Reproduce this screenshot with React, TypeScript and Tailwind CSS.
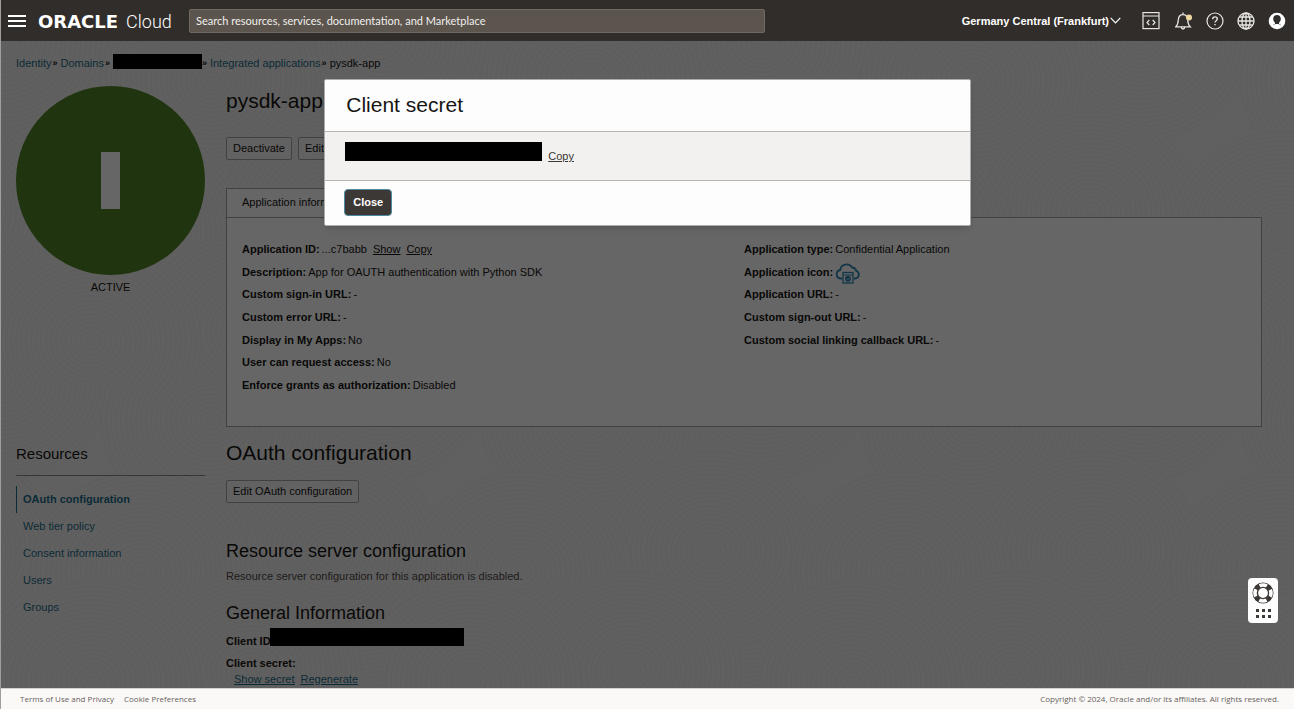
import React from "react";

type Detail = { label: string; value: React.ReactNode };

const linkClass = "text-[#1b6c87]";

function Crumb({ children }: { children: React.ReactNode }) {
  return (
    <li className="flex items-center gap-px">
      <a href="#" className={linkClass}>
        {children}
      </a>
      <Separator />
    </li>
  );
}

function Separator() {
  return <span className="text-[9px] font-bold">»</span>;
}

function AppIcon() {
  return (
    <svg className="inline-block" width="26" height="22" viewBox="0 0 26 22" fill="none" stroke="#2f86b5" strokeWidth="1.8" role="img" aria-label="Application icon">
      <path d="M7 15.500H5.500a4.300 4.300 0 0 1-.3-8.500 6.500 6.500 0 0 1 12-2.500 4.500 4.500 0 0 1 4 3.300 4 4 0 0 1-.7 7.700H19" />
      <rect x="8" y="9.500" width="10" height="10.500" strokeWidth="1.300" />
      <path d="M8.500 12h9" strokeWidth="1" />
      <circle cx="13" cy="15.800" r="3" fill="#2f86b5" stroke="none" />
      <path d="M11.800 15.800l1 1 1.500-2" stroke="#d8e8f0" strokeWidth="0.800" />
    </svg>
  );
}

const leftDetails: Detail[] = [
  {
    label: "Application ID:",
    value: (
      <>
        ...c7babb
        <a href="#" className="ml-1.5 underline">Show</a>
        <a href="#" className="ml-1.5 underline">Copy</a>
      </>
    ),
  },
  { label: "Description:", value: "App for OAUTH authentication with Python SDK" },
  { label: "Custom sign-in URL:", value: "-" },
  { label: "Custom error URL:", value: "-" },
  { label: "Display in My Apps:", value: "No" },
  { label: "User can request access:", value: "No" },
  { label: "Enforce grants as authorization:", value: "Disabled" },
];

const rightDetails: Detail[] = [
  { label: "Application type:", value: "Confidential Application" },
  { label: "Application icon:", value: <span className="inline-flex pt-1"><AppIcon /></span> },
  { label: "Application URL:", value: "-" },
  { label: "Custom sign-out URL:", value: "-" },
  { label: "Custom social linking callback URL:", value: "-" },
];

function DetailList({ items }: { items: Detail[] }) {
  return (
    <dl className="grid h-[158px] grid-rows-7">
      {items.map((d) => (
        <div key={d.label} className="flex items-center gap-0.5">
          <dt className="font-bold">{d.label}</dt>
          <dd className="flex items-center">{d.value}</dd>
        </div>
      ))}
    </dl>
  );
}

function OutlineButton({ children }: { children: React.ReactNode }) {
  return (
    <button type="button" className="flex h-[23px] items-center rounded-xs border border-[#a3a3a3] bg-white/40 px-1.5 pb-px">
      {children}
    </button>
  );
}

const ripples = Array.from({ length: 22 }, (_, i) => 5 + i * 5);

const rippleCenters = [
  [0, 0],
  [380, 0],
  [0, 340],
  [380, 340],
  [210, 40],
  [330, 170],
  [-50, 170],
  [140, 190],
  [250, 290],
  [90, 300],
];

function Texture() {
  return (
    <svg className="absolute inset-0 h-full w-full" aria-hidden="true">
      <defs>
        <pattern id="ripples" width="380" height="340" patternUnits="userSpaceOnUse">
          {rippleCenters.map(([x, y]) => (
            <g key={`${x}-${y}`} fill="none" stroke="#eeeceb" strokeWidth="2">
              <ellipse cx={x} cy={y} rx="110" ry="99" fill="#f3f1f1" />
              {ripples.map((r) => (
                <ellipse key={r} cx={x} cy={y} rx={r} ry={r * 0.9} />
              ))}
            </g>
          ))}
        </pattern>
      </defs>
      <rect width="100%" height="100%" fill="url(#ripples)" />
    </svg>
  );
}

function Header() {
  return (
    <header className="flex h-[41px] shrink-0 items-center bg-[#312d2a] pr-2 pl-[7px] text-white">
      <button type="button" aria-label="Menu" className="mr-3 flex w-[18px] flex-col gap-[3px]">
        <span className="h-0.5 w-full bg-white" />
        <span className="h-0.5 w-full bg-white" />
        <span className="h-0.5 w-full bg-white" />
      </button>
      <a href="#" className="flex w-[151px] items-baseline gap-2 pt-0.5 leading-5">
        <span className="font-['DejaVu_Sans',sans-serif] text-[18px] font-bold">ORACLE</span>
        <span className="font-[Roboto,sans-serif] text-[18px] font-light">Cloud</span>
      </a>
      <input
        type="text"
        aria-label="Search"
        placeholder="Search resources, services, documentation, and Marketplace"
        className="h-6 w-[576px] rounded-xs border border-[#6f6961] bg-[#5b554e] px-1.5 font-[Lato,sans-serif] text-[11px] text-white placeholder:text-[#f1efed] placeholder:opacity-100"
      />
      <div className="ml-auto flex items-center gap-[13px]">
        <button type="button" className="mr-2 flex items-center gap-px font-bold">
          Germany Central (Frankfurt)
          <svg width="11" height="7" viewBox="0 0 11 7" fill="none" stroke="currentColor" strokeWidth="1.200"><path d="M.7.8l4.800 5 4.800-5" /></svg>
        </button>
        <button type="button" aria-label="Developer tools" className="mr-0.5">
          <svg width="18" height="18" viewBox="0 0 18 18" fill="none" stroke="#e8e6e4" strokeWidth="1.200">
            <rect x="1" y="0.600" width="16" height="16" />
            <path d="M1 4h16M7.300 8L5 10.500l2.300 2.500M10.700 8l2.300 2.500-2.300 2.500" />
          </svg>
        </button>
        <button type="button" aria-label="Announcements">
          <svg width="18" height="18" viewBox="0 0 18 18" fill="none" stroke="#e8e6e4" strokeWidth="1.300">
            <path d="M.8 14.800c2-1.800 2.300-3.300 2.500-6.800.2-3.500 1.800-5.300 4.700-5.300s4.500 1.800 4.700 5.300c.2 3.500.5 5 2.500 6.800zM8 2.700V.5M6.200 15c.2 1.500.8 2 1.800 2s1.600-.5 1.800-2" />
            <circle cx="14" cy="5.500" r="3" fill="#f0d9a0" stroke="none" />
          </svg>
        </button>
        <button type="button" aria-label="Help">
          <svg width="18" height="18" viewBox="0 0 18 18" fill="none" stroke="#e8e6e4" strokeWidth="1.200">
            <circle cx="9" cy="9" r="8" />
            <path d="M6.700 7.200c0-1.500 1-2.300 2.300-2.300s2.300.8 2.300 2.100c0 1.600-2.300 1.800-2.300 3.600M9 11.900v1.400" strokeWidth="1.400" />
          </svg>
        </button>
        <button type="button" aria-label="Language">
          <svg width="18" height="18" viewBox="0 0 18 18" fill="none" stroke="#e8e6e4" strokeWidth="1.300">
            <circle cx="9" cy="9" r="8" />
            <ellipse cx="9" cy="9" rx="4" ry="8" />
            <path d="M9 1v16M1 9h16M2.300 5h13.400M2.300 13h13.400" />
          </svg>
        </button>
        <button type="button" aria-label="Profile">
          <svg width="18" height="18" viewBox="0 0 18 18">
            <circle cx="9" cy="9" r="8.300" fill="#fff" />
            <path d="M9 3c2.300 0 3.800 1.500 3.800 3.800 0 1.700-.8 3.100-1.800 3.900v1l2 1.400c-1 2-2.300 2.600-4 2.600s-3-.6-4-2.600l2-1.400v-1c-1-.8-1.800-2.200-1.800-3.900C5.200 4.500 6.700 3 9 3z" fill="#312d2a" />
            <path d="M4 14.200c1.500-1.600 3-2.200 5-2.200s3.500.6 5 2.200a7 7 0 0 1-10 0z" fill="#fff" />
          </svg>
        </button>
      </div>
    </header>
  );
}

const resources = ["OAuth configuration", "Web tier policy", "Consent information", "Users", "Groups"];

function Sidebar() {
  return (
    <aside className="w-[189px] shrink-0">
      <div className="flex aspect-square items-center justify-center rounded-full bg-[#508626]">
        <span className="h-[57px] w-[19px] bg-white" role="img" aria-label="I" />
      </div>
      <p className="mt-1 text-center">ACTIVE</p>
      <h2 className="mt-[149px] border-b border-[#8c8a88] pb-[11px] text-[15px] leading-5">Resources</h2>
      <nav className="mt-2.5">
        {resources.map((name, i) => (
          <a
            key={name}
            href="#"
            className={`flex h-[27px] items-center pb-0.5 text-[#1b6c87] ${i === 0 ? "border-l border-[#1b6c87] pl-1.5 font-bold" : "pl-[7px]"}`}
          >
            {name}
          </a>
        ))}
      </nav>
    </aside>
  );
}

function Content() {
  return (
    <main className="min-w-0 flex-1 pt-[3px]">
      <h1 className="text-[21px] leading-6">pysdk-app</h1>
      <div className="mt-6 flex gap-1.5">
        <OutlineButton>Deactivate</OutlineButton>
        <OutlineButton>Edit application</OutlineButton>
      </div>
      <div className="mt-7 flex">
        <button type="button" className="h-[30px] border border-[#a3a3a3] bg-white px-[15px] pb-0.5">
          Application information
        </button>
      </div>
      <section className="-mt-px grid grid-cols-2 border border-[#a3a3a3] bg-white px-[15px] pt-5 pb-[30px]">
        <DetailList items={leftDetails} />
        <DetailList items={rightDetails} />
      </section>
      <h2 className="mt-3.5 mb-[15px] text-[21px] leading-6">OAuth configuration</h2>
      <OutlineButton>Edit OAuth configuration</OutlineButton>
      <h3 className="mt-[37px] text-[18px] leading-[22px]">Resource server configuration</h3>
      <p className="mt-1.5 text-[#4a4846]">Resource server configuration for this application is disabled.</p>
      <h3 className="mt-[18px] text-[18px] leading-[22px]">General Information</h3>
      <div className="mt-1 flex items-end">
        <span className="font-bold">Client ID:</span>
        <span className="-ml-1 mb-[3px] h-[18px] w-[194px] bg-black" />
      </div>
      <p className="mt-1.5 font-bold">Client secret:</p>
      <div className="flex gap-1.5 pl-2 underline">
        <a href="#" className={linkClass}>Show secret</a>
        <a href="#" className={linkClass}>Regenerate</a>
      </div>
    </main>
  );
}

function SecretDialog() {
  return (
    <div className="absolute inset-0 flex items-start justify-center bg-black/60 pt-[38px]">
      <div role="dialog" aria-modal="true" aria-labelledby="dialog-title" className="w-1/2 rounded-xs border border-[#aeacab] bg-[#fdfdfd] shadow-md">
        <h2 id="dialog-title" className="px-[21px] pt-[13px] pb-[14px] text-[21px] leading-6">Client secret</h2>
        <div className="flex items-start gap-1.5 border-y border-[#b8b5b2] bg-[#f2f1ef] px-5 pt-2.5 pb-4">
          <span className="h-[19px] w-[197px] bg-black" />
          <button type="button" className="mt-1.5 leading-4 text-[#3a3633] underline">Copy</button>
        </div>
        <div className="px-[19px] pt-2 pb-[9px]">
          <button type="button" className="h-[27px] rounded border border-[#4f8ba0] bg-[#3c3835] px-2 pb-0.5 font-bold text-white">Close</button>
        </div>
      </div>
    </div>
  );
}

function SupportWidget() {
  return (
    <button type="button" aria-label="Support" className="absolute right-4 bottom-[65px] flex flex-col items-center rounded bg-[#fdfdfd] px-1 pt-1 pb-1">
      <svg width="22" height="37" viewBox="0 0 22 37" fill="none">
        <circle cx="11" cy="11" r="7.500" stroke="#3c3835" strokeWidth="6" />
        <circle cx="11" cy="11" r="8" stroke="#fff" strokeWidth="3.600" strokeDasharray="7.500 5.066" strokeDashoffset="3.750" />
        <circle cx="11" cy="11" r="5.500" fill="#fff" stroke="#3c3835" strokeWidth="1.200" />
        {[4, 10, 16].map((x) => (
          <g key={x} fill="#3c3835">
            <rect x={x} y="27" width="3" height="3" />
            <rect x={x} y="33" width="3" height="3" />
          </g>
        ))}
      </svg>
    </button>
  );
}

export default function App() {
  return (
    <div className="flex h-screen flex-col border-l border-[#a19f9d] bg-[#f3f1f1] font-['Liberation_Sans',Arial,sans-serif] text-[11px] leading-4 text-[#161513]">
      <Header />
      <div className="relative min-h-0 flex-1 overflow-hidden">
        <Texture />
        <div className="relative pt-3.5 pr-8 pl-[15px]">
          <ol className="flex h-4 items-center gap-[3px]">
            <Crumb>Identity</Crumb>
            <Crumb>Domains</Crumb>
            <li className="flex items-center">
              <span className="mb-[3px] h-[15px] w-[89px] bg-black" />
              <Separator />
            </li>
            <Crumb>Integrated applications</Crumb>
            <li>pysdk-app</li>
          </ol>
          <div className="mt-[15px] flex gap-[21px]">
            <Sidebar />
            <Content />
          </div>
        </div>
        <SecretDialog />
        <SupportWidget />
      </div>
      <footer className="flex h-[21px] shrink-0 items-center gap-2.5 border-t border-[#d4d1ce] bg-[#fbf9f8] pr-[15px] pl-[19px] font-['Open_Sans',sans-serif] text-[8px] text-[#66615c]">
        <a href="#">Terms of Use and Privacy</a>
        <a href="#">Cookie Preferences</a>
        <p className="ml-auto">Copyright © 2024, Oracle and/or its affiliates. All rights reserved.</p>
      </footer>
    </div>
  );
}
